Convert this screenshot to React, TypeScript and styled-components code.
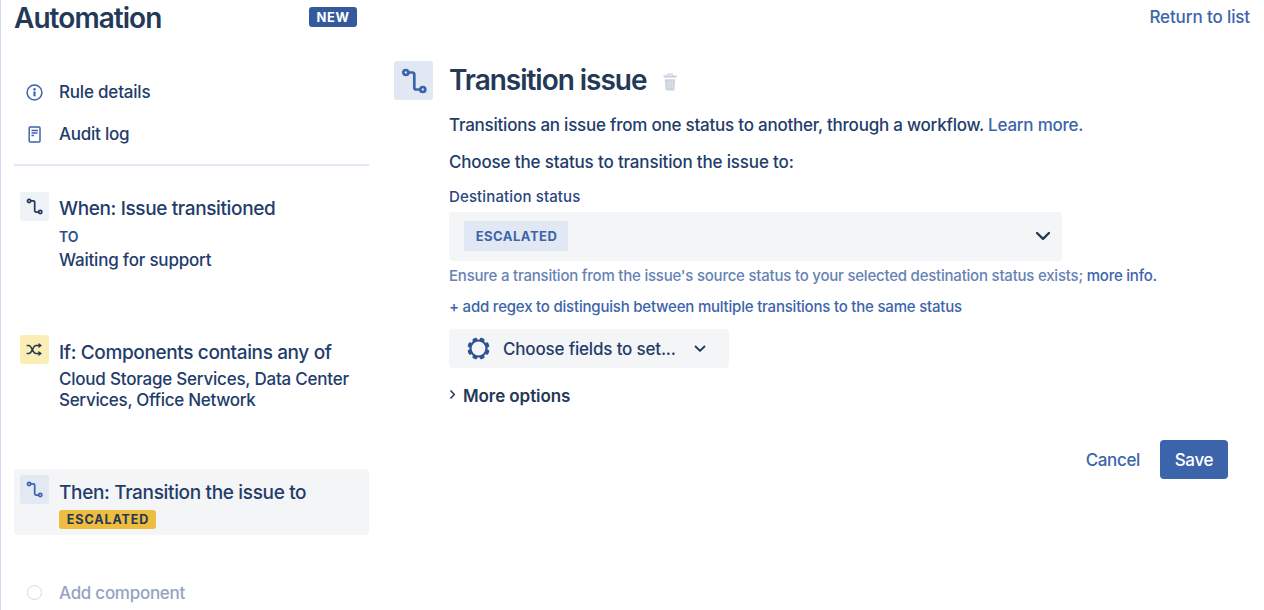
import React from "react";
import styled, { createGlobalStyle } from "styled-components";

const navy = "#243858";
const ink = "#233c6b";
const blue = "#3c64ab";

const GlobalStyle = createGlobalStyle`
  * { box-sizing: border-box; }
  body {
    margin: 0;
    background: #fff;
    color: ${ink};
    font-family: Inter, "Liberation Sans", sans-serif;
    overflow: hidden;
  }
  h1, h2 { margin: 0; }
  svg { display: block; flex: none; }
`;

const Page = styled.div`
  display: flex;
  width: 1264px;
  height: 610px;
  border-left: 1px solid #cddaf0;
  overflow: hidden;
`;

const Sidebar = styled.aside`
  width: 355px;
  margin-left: 13px;
  flex: none;
  display: flex;
  flex-direction: column;
`;

const Line = styled.div<{ $size: number; $height: number; $track?: number; $weight?: number; $color?: string }>`
  font-size: ${(p) => p.$size}px;
  line-height: ${(p) => p.$height}px;
  letter-spacing: ${(p) => p.$track ?? 0}px;
  font-weight: ${(p) => p.$weight ?? 450};
  color: ${(p) => p.$color ?? ink};
  white-space: nowrap;
`;

const SidebarHeader = styled.header`
  display: flex;
  justify-content: space-between;
  align-items: center;
  height: 36px;
  padding-right: 12px;
`;

const NewBadge = styled.span`
  width: 48px;
  height: 20px;
  margin-top: -2px;
  border-radius: 3px;
  background: #345a9d;
  color: #fff;
  font-size: 13px;
  line-height: 20px;
  font-weight: 700;
  letter-spacing: 0.5px;
  text-align: center;
`;

const Nav = styled.nav`
  display: flex;
  flex-direction: column;
  padding-top: 35px;
  height: 130px;
  border-bottom: 2px solid #e3e9f3;
`;

const NavItem = styled.a`
  display: flex;
  align-items: center;
  height: 42px;
  padding-left: 12px;
  gap: 16px;
`;

const Step = styled.section<{ $height: number; $gap: number; $active?: boolean }>`
  display: flex;
  gap: 10px;
  height: ${(p) => p.$height}px;
  margin-top: ${(p) => p.$gap}px;
  padding: 6px;
  border-radius: 4px;
  background: ${(p) => (p.$active ? "#f4f5f7" : "transparent")};
`;

const StepIcon = styled.div<{ $bg: string }>`
  display: flex;
  flex: none;
  align-items: center;
  justify-content: center;
  width: 29px;
  height: 29px;
  border-radius: 3px;
  background: ${(p) => p.$bg};
`;

const StepBody = styled.div<{ $top: number }>`
  padding-top: ${(p) => p.$top}px;
`;

const StatusBadge = styled.div`
  width: 97px;
  height: 19px;
  margin-top: 3px;
  border-radius: 3px;
  background: #eebc3f;
  color: ${navy};
  font-size: 12.5px;
  line-height: 19px;
  font-weight: 700;
  letter-spacing: 0.9px;
  text-indent: 1px;
  text-align: center;
`;

const AddRow = styled.div`
  display: flex;
  align-items: center;
  height: 30px;
  margin-top: 43px;
  padding-left: 13px;
  gap: 17px;
`;

const AddDot = styled.span`
  width: 15px;
  height: 15px;
  margin-top: -2px;
  border: 1px solid #cfdaec;
  border-radius: 50%;
`;

const Main = styled.main`
  flex: 1;
  display: flex;
  flex-direction: column;
  padding-left: 25px;
`;

const TopBar = styled.div`
  display: flex;
  justify-content: flex-end;
  height: 61px;
  padding: 2px 14px 0 0;
`;

const TitleRow = styled.div`
  display: flex;
  align-items: center;
  height: 39px;
`;

const TitleIcon = styled.div`
  display: flex;
  align-items: center;
  justify-content: center;
  width: 39px;
  height: 39px;
  margin-right: 16px;
  border-radius: 3px;
  background: #e1e8f3;
`;

const Trash = styled.span`
  margin: 2px 0 0 17px;
`;

const Content = styled.div`
  display: flex;
  flex-direction: column;
  padding-left: 55px;
`;

const Link = styled.a<{ $weight?: number }>`
  color: ${blue};
  font-weight: ${(p) => p.$weight ?? 450};
`;

const FieldLabel = styled.label`
  height: 38px;
  padding-top: 8px;
`;

const Select = styled.div`
  display: flex;
  align-items: center;
  justify-content: space-between;
  width: 613px;
  height: 49px;
  padding: 0 11px 1px 15px;
  border-radius: 4px;
  background: #f4f5f7;
`;

const Lozenge = styled.span`
  width: 104px;
  height: 30px;
  background: #e1e8f3;
  color: ${blue};
  font-size: 13px;
  line-height: 30px;
  font-weight: 700;
  letter-spacing: 0.5px;
  text-indent: 1px;
  text-align: center;
`;

const FieldsButton = styled.div`
  display: flex;
  align-items: center;
  width: 280px;
  height: 39px;
  margin: 6px 0 12px;
  padding: 0 23px 0 18px;
  gap: 13px;
  border-radius: 4px;
  background: #f4f5f7;
`;

const ButtonChevron = styled.span`
  margin: 1px 0 0 5px;
`;

const MoreRow = styled.div`
  display: flex;
  align-items: center;
  height: 32px;
  gap: 7px;
`;

const MoreArrow = styled.span`
  margin-top: -4px;
`;

const Actions = styled.footer`
  display: flex;
  justify-content: flex-end;
  align-items: center;
  height: 39px;
  margin-top: 28px;
  padding-right: 36px;
  gap: 20px;
`;

const SaveButton = styled.div`
  display: flex;
  align-items: center;
  justify-content: center;
  width: 68px;
  height: 39px;
  border-radius: 4px;
  background: ${blue};
`;

const FlowIcon = ({ size, color, weight }: { size: number; color: string; weight: number }) => (
  <svg width={size} height={size} viewBox="0 0 26 26" fill="none" stroke={color} strokeWidth={weight} strokeLinecap="round">
    <circle cx="4.8" cy="4.5" r="2.5" />
    <circle cx="21.8" cy="21.5" r="2.5" />
    <path d="M7.6 4.500h3.700q2 0 2 2v13q0 2 2 2h3.700" />
  </svg>
);

const ShuffleIcon = () => (
  <svg width="17" height="15" viewBox="0 0 17 15" fill="none" stroke={navy} strokeWidth="1.5" strokeLinecap="round" strokeLinejoin="round">
    <path d="M1.200 3.500h1.500c3.500 0 3.500 8 7.300 8h4M1.200 11.500h1.500c3.800 0 3.800-8 7.300-8h4" />
    <path d="M13 1.800 15.500 3.500 13 5.200zM13 9.800l2.500 1.700-2.500 1.700z" fill={navy} strokeWidth=".8" />
  </svg>
);

const InfoIcon = () => (
  <svg width="17" height="17" viewBox="0 0 17 17" fill="none">
    <circle cx="8.5" cy="8.5" r="7.4" stroke={blue} strokeWidth="1.5" />
    <circle cx="8.5" cy="5.3" r="1.2" fill={blue} />
    <path d="M8.500 8.400v3" stroke={blue} strokeWidth="2.2" strokeLinecap="round" />
  </svg>
);

const LogIcon = () => (
  <svg width="17" height="17" viewBox="0 0 17 17" fill="none" stroke={blue}>
    <rect x="3.2" y=".9" width="10.8" height="15.2" rx="1" strokeWidth="1.5" />
    <path d="M5.500 4.500h6.500M5.500 7h6M5.500 9.500h2.500" strokeWidth="1.3" />
  </svg>
);

const TrashIcon = () => (
  <svg width="14" height="18" viewBox="0 0 14 18" fill="none">
    <path d="M4.500 2.500V1.200h5v1.300" stroke="#d0d8e4" strokeWidth="1.2" />
    <rect x=".5" y="2.6" width="13" height="2" rx=".6" fill="#c7cfdb" />
    <path d="M1.800 6.200h10.400l-.7 10q-.1 1.300-1.400 1.300H3.900q-1.300 0-1.400-1.300z" fill="#ccd3df" />
    <path d="M4.800 8v7.500M7 8v7.500M9.200 8v7.500" stroke="#e8e9e6" strokeWidth=".8" />
  </svg>
);

const teeth = Array.from({ length: 8 }, (_, i) => i * 45 + 22.5);

const GearIcon = () => (
  <svg width="23" height="23" viewBox="0 0 23 23">
    {teeth.map((angle) => (
      <rect key={angle} x="9" y=".4" width="5" height="4" rx="1.5" fill="#2f5391" transform={`rotate(${angle} 11.5 11.5)`} />
    ))}
    <circle cx="11.5" cy="11.5" r="8" fill="#f4f5f7" stroke="#2f5391" strokeWidth="2.2" />
  </svg>
);

const Chevron = ({ width, weight }: { width: number; weight: number }) => (
  <svg width={width} height={width * 0.62} viewBox="0 0 16 10" fill="none" stroke={navy} strokeWidth={weight} strokeLinecap="round" strokeLinejoin="round">
    <path d="M2 2l6 6 6-6" />
  </svg>
);

export default function App() {
  return (
    <>
      <GlobalStyle />
      <Page>
        <Sidebar>
          <SidebarHeader>
            <Line as="h1" $size={28} $height={36} $weight={600} $color={navy} $track={-0.95}>Automation</Line>
            <NewBadge>NEW</NewBadge>
          </SidebarHeader>
          <Nav>
            <NavItem><InfoIcon /><Line $size={17} $height={24} $track={-0.2}>Rule details</Line></NavItem>
            <NavItem><LogIcon /><Line $size={17} $height={24} $track={-0.25}>Audit log</Line></NavItem>
          </Nav>
          <Step $height={90} $gap={20}>
            <StepIcon $bg="#eff2f7"><FlowIcon size={17} color={navy} weight={2.6} /></StepIcon>
            <StepBody $top={4}>
              <Line $size={19} $height={26} $track={-0.37}>When: Issue transitioned</Line>
              <Line $size={14} $height={29} $weight={600} $color="#2f5087">TO</Line>
              <Line $size={17} $height={19} $track={-0.2}>Waiting for support</Line>
            </StepBody>
          </Step>
          <Step $height={90} $gap={53}>
            <StepIcon $bg="#fbeeb4"><ShuffleIcon /></StepIcon>
            <StepBody $top={3}>
              <Line $size={19} $height={29} $track={-0.37}>If: Components contains any of</Line>
              <Line $size={17} $height={24} $track={-0.22}>Cloud Storage Services, Data Center</Line>
              <Line $size={17} $height={18} $track={-0.3}>Services, Office Network</Line>
            </StepBody>
          </Step>
          <Step $height={66} $gap={50} $active>
            <StepIcon $bg="#e3e9f3"><FlowIcon size={17} color={blue} weight={2.6} /></StepIcon>
            <StepBody $top={3}>
              <Line $size={19} $height={29} $track={-0.34}>Then: Transition the issue to</Line>
              <StatusBadge>ESCALATED</StatusBadge>
            </StepBody>
          </Step>
          <AddRow><AddDot /><Line $size={17} $height={24} $color="#95a3bf" $track={-0.28}>Add component</Line></AddRow>
        </Sidebar>
        <Main>
          <TopBar><Line $size={17} $height={31} $color={blue} $track={-0.12}>Return to list</Line></TopBar>
          <TitleRow>
            <TitleIcon><FlowIcon size={26} color={blue} weight={2.7} /></TitleIcon>
            <Line as="h2" $size={28} $height={41} $weight={600} $color={navy} $track={-1.03}>Transition issue</Line>
            <Trash><TrashIcon /></Trash>
          </TitleRow>
          <Content>
            <Line $size={17} $height={50} $track={-0.235}>Transitions an issue from one status to another, through a workflow. <Link>Learn more.</Link></Line>
            <Line $size={17} $height={24} $track={-0.16}>Choose the status to transition the issue to:</Line>
            <FieldLabel><Line $size={15} $height={30} $weight={550} $track={0.13} $color="#2a467c">Destination status</Line></FieldLabel>
            <Select><Lozenge>ESCALATED</Lozenge><Chevron width={16} weight={2.4} /></Select>
            <Line $size={15} $height={30} $color="#6682b5" $track={-0.22}>Ensure a transition from the issue's source status to your selected destination status exists; <Link $weight={500}>more info.</Link></Line>
            <Line $size={15} $height={32} $color={blue} $track={-0.205}>+ add regex to distinguish between multiple transitions to the same status</Line>
            <FieldsButton>
              <GearIcon />
              <Line $size={17} $height={24} $track={-0.18}>Choose fields to set...</Line>
              <ButtonChevron><Chevron width={12} weight={2.5} /></ButtonChevron>
            </FieldsButton>
            <MoreRow>
              <MoreArrow>
                <svg width="7" height="11" viewBox="0 0 7 11" fill="none" stroke={navy} strokeWidth="1.5"><path d="M1.500 1.500l3.800 4-3.800 4" /></svg>
              </MoreArrow>
              <Line $size={17} $height={24} $weight={600} $color={navy} $track={-0.08}>More options</Line>
            </MoreRow>
          </Content>
          <Actions>
            <Line $size={17} $height={24} $color={blue} $track={-0.35}>Cancel</Line>
            <SaveButton><Line $size={17} $height={24} $color="#fff" $track={-0.3}>Save</Line></SaveButton>
          </Actions>
        </Main>
      </Page>
    </>
  );
}
